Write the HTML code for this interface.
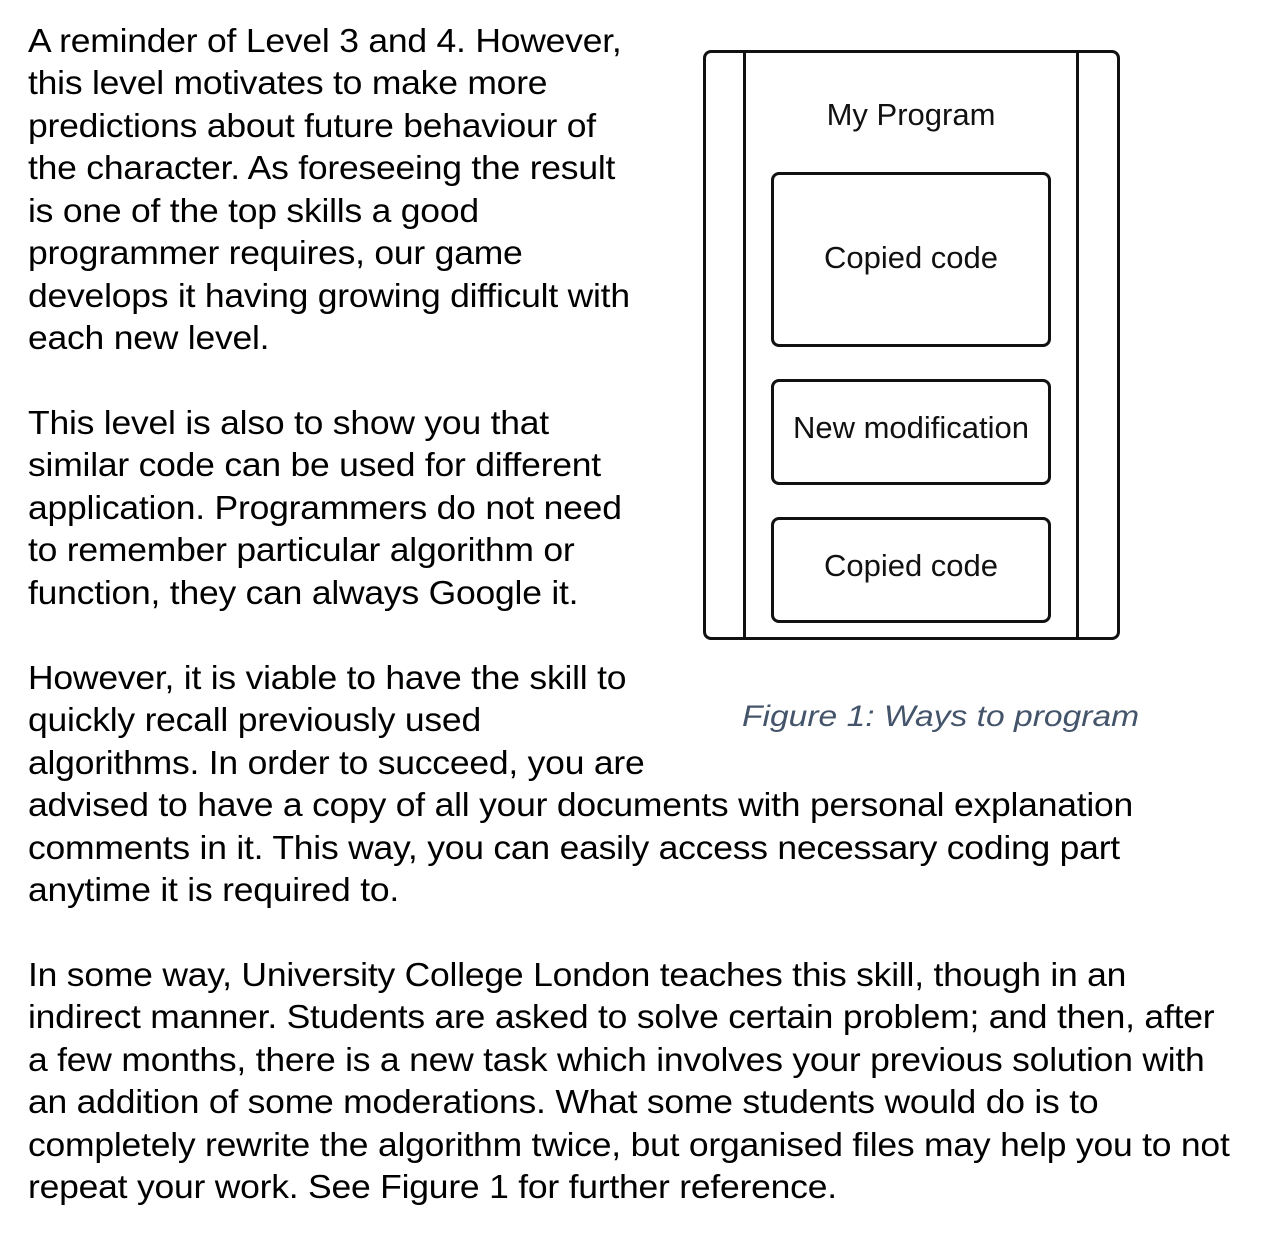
<!DOCTYPE html>
<html><head><meta charset="utf-8"><style>
body{margin:0;width:1270px;height:1250px;background:#fff;position:relative;overflow:hidden;font-family:"Liberation Sans",Arial,sans-serif;color:#000}
.l{position:absolute;left:28px;font-size:33px;line-height:42px;white-space:nowrap;letter-spacing:-0.2px;transform:scaleX(1.075);transform-origin:0 0}
.b{position:absolute;border:3px solid #111;border-radius:8px;box-sizing:border-box;display:flex;align-items:center;justify-content:center;font-size:31px;color:#111}
.v{position:absolute;top:50px;width:3px;height:589px;background:#111}
</style></head><body>
<div class="l" style="top:20px">A reminder of Level 3 and 4. However,</div>
<div class="l" style="top:62px">this level motivates to make more</div>
<div class="l" style="top:105px">predictions about future behaviour of</div>
<div class="l" style="top:147px">the character. As foreseeing the result</div>
<div class="l" style="top:190px">is one of the top skills a good</div>
<div class="l" style="top:232px">programmer requires, our game</div>
<div class="l" style="top:275px">develops it having growing difficult with</div>
<div class="l" style="top:317px">each new level.</div>
<div class="l" style="top:402px">This level is also to show you that</div>
<div class="l" style="top:444px">similar code can be used for different</div>
<div class="l" style="top:487px">application. Programmers do not need</div>
<div class="l" style="top:529px">to remember particular algorithm or</div>
<div class="l" style="top:572px">function, they can always Google it.</div>
<div class="l" style="top:657px">However, it is viable to have the skill to</div>
<div class="l" style="top:699px">quickly recall previously used</div>
<div class="l" style="top:742px">algorithms. In order to succeed, you are</div>
<div class="l" style="top:784px">advised to have a copy of all your documents with personal explanation</div>
<div class="l" style="top:827px">comments in it. This way, you can easily access necessary coding part</div>
<div class="l" style="top:869px">anytime it is required to.</div>
<div class="l" style="top:954px">In some way, University College London teaches this skill, though in an</div>
<div class="l" style="top:996px">indirect manner. Students are asked to solve certain problem; and then, after</div>
<div class="l" style="top:1039px">a few months, there is a new task which involves your previous solution with</div>
<div class="l" style="top:1081px">an addition of some moderations. What some students would do is to</div>
<div class="l" style="top:1124px">completely rewrite the algorithm twice, but organised files may help you to not</div>
<div class="l" style="top:1166px">repeat your work. See Figure 1 for further reference.</div>

<div class="b" style="left:703px;top:50px;width:417px;height:590px"></div>
<div class="v" style="left:743px"></div>
<div class="v" style="left:1076px"></div>
<div style="position:absolute;left:746px;width:330px;top:95px;text-align:center;font-size:31px;line-height:40px;color:#111">My Program</div>
<div class="b" style="left:771px;top:172px;width:280px;height:175px;padding-bottom:4px">Copied code</div>
<div class="b" style="left:771px;top:379px;width:280px;height:106px;padding-bottom:8px">New modification</div>
<div class="b" style="left:771px;top:517px;width:280px;height:106px;padding-bottom:8px">Copied code</div>
<div style="position:absolute;left:742px;top:697px;font-size:30px;line-height:40px;font-style:italic;color:#44546a;white-space:nowrap;transform:scaleX(1.12);transform-origin:0 0">Figure 1: Ways to program</div>
</body></html>
